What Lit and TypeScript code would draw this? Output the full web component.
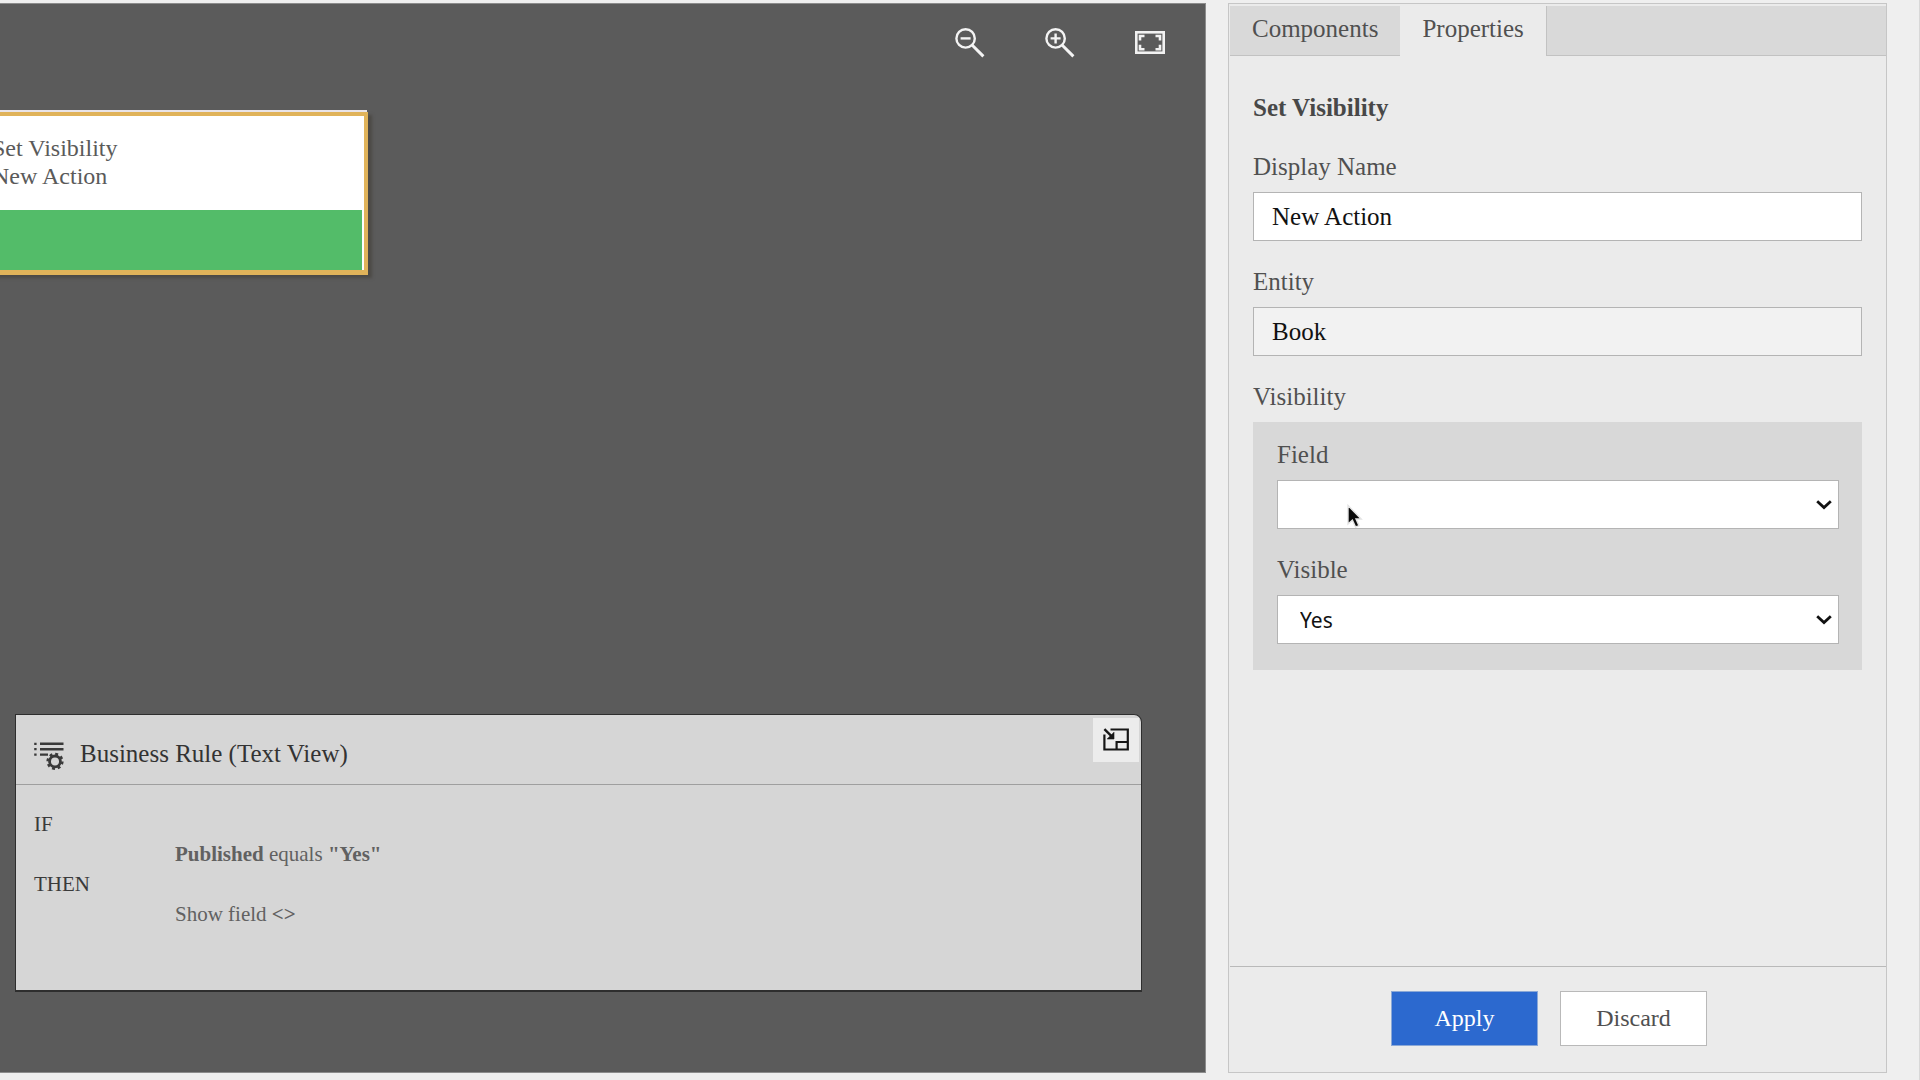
import { LitElement, html, css, svg } from "lit";
import { customElement, state } from "lit/decorators.js";

const chevron = html`<svg class="chevron" viewBox="0 0 16 10" width="16" height="10" aria-hidden="true">
  <path d="M1.2 1.3 L8 7.6 L14.8 1.3" fill="none" stroke="#111" stroke-width="2.8" />
</svg>`;

const magnifier = (sign: string) => html`<svg viewBox="0 0 30 30" width="30" height="30" aria-hidden="true">
  <g fill="none" stroke="#f4f4f4" stroke-width="2.4">
    <circle cx="10.6" cy="10.4" r="9.2" />
    ${svg`<path d=${sign} stroke-width="2.4" />`}
    <path d="M16.8 16.8 L28.4 28.4" stroke-width="3" />
  </g>
</svg>`;

@customElement("app-root")
export class AppRoot extends LitElement {
  static styles = css`
    :host {
      display: block;
      font-family: "Liberation Serif", "Times New Roman", serif;
      font-size: 25px;
      line-height: 30px;
      color: #505050;
    }
    * { box-sizing: border-box; }
    button, input, select { font: inherit; color: inherit; margin: 0; border-radius: 0; }
    button { cursor: pointer; }
    svg { display: block; }

    .page {
      display: flex;
      gap: 22px;
      min-height: 100vh;
      padding: 3px 32px 7px 0;
      background: #efefef;
      border-right: 1px solid #d8d8d8;
    }

    .canvas {
      flex: 1;
      min-width: 0;
      position: relative;
      overflow: hidden;
      display: flex;
      flex-direction: column;
      justify-content: space-between;
      padding: 24px 63px 80px 15px;
      background: #5b5b5b;
      border: 1px solid #8c8c8c;
      border-left: 0;
    }
    .tools {
      display: flex;
      justify-content: flex-end;
      gap: 60px;
      margin-right: -23px;
    }
    .tool {
      padding: 0;
      border: 0;
      background: none;
    }
    .node {
      position: absolute;
      left: -60px;
      top: 108px;
      width: 428px;
      height: 163px;
      display: flex;
      flex-direction: column;
      border: 4px solid #e0b35a;
      border-bottom-width: 5px;
      background: #fff;
      box-shadow: -1px -2px 0 #e9e4e8, 4px 3px 3px #4c4a46;
    }
    .node-text {
      flex: 1;
      padding: 18px 48px;
      font-size: 24px;
      line-height: 28px;
      color: #5a5a5a;
    }
    .node-bar {
      height: 60px;
      margin-right: 2px;
      background: #53bc69;
    }

    .rule {
      border: 1px solid #2e2e2e;
      border-bottom-width: 2px;
      border-top-right-radius: 8px;
      background: #d6d6d6;
      overflow: hidden;
    }
    .rule-head {
      display: flex;
      align-items: center;
      gap: 16px;
      height: 70px;
      padding: 0 2px 0 18px;
      border-bottom: 1px solid #9f9f9f;
      color: #333;
    }
    .rule-title { flex: 1; margin: 0; padding-top: 8px; font-size: 25px; font-weight: 400; }
    .rule-icon { padding-top: 12px; }
    .mini {
      align-self: flex-start;
      display: grid;
      place-items: center;
      width: 46px;
      height: 44px;
      margin-top: 3px;
      padding: 0 0 2px;
      border: 0;
      background: #ececec;
    }
    .rule-body {
      margin: 0;
      height: 205px;
      padding: 24px 18px;
      font-size: 21px;
    }
    .rule-body dt { color: #3a3a3a; }
    .rule-body dd { margin: 0 0 0 141px; color: #616161; }

    .side {
      width: 659px;
      display: flex;
      flex-direction: column;
      padding: 2px 0 0 1px;
      background: #ebebeb;
      border: 1px solid #c6c6c6;
    }
    .tabs { display: flex; height: 50px; }
    .tab {
      padding: 0 22px 3px;
      border: 0;
      border-bottom: 1px solid #c2c2c2;
      background: #d9d9d9;
    }
    .tab.active { background: none; border-color: transparent; }
    .tab-rest {
      flex: 1;
      background: #d9d9d9;
      border: solid #c2c2c2;
      border-width: 0 0 1px 1px;
    }
    .form { flex: 1; padding: 37px 24px 24px 23px; }
    .heading { margin: 0 0 29px; font-size: 25px; line-height: 30px; color: #484848; }
    .field { display: flex; flex-direction: column; gap: 10px; margin-bottom: 26px; }
    .box {
      width: 100%;
      height: 49px;
      padding: 0 18px;
      border: 1px solid #b4b4b4;
      background: #fff;
      color: #111;
      outline: 0;
    }
    .box[readonly] { background: #f2f2f2; }
    .group-label { margin: 0; padding: 0; }
    .group {
      margin-top: 10px;
      padding: 18px 23px 26px 24px;
      background: #d8d8d8;
    }
    .group .field:last-child { margin-bottom: 0; }
    .pick { position: relative; }
    select.box {
      display: block;
      appearance: none;
      padding: 0 22px;
      font-family: "Noto Sans", sans-serif;
      font-size: 21px;
    }
    .chevron { position: absolute; right: 7px; top: 20px; pointer-events: none; }
    .pointer { position: absolute; left: 69px; top: 24px; pointer-events: none; }

    .actions {
      display: flex;
      justify-content: center;
      gap: 22px;
      height: 106px;
      padding: 24px 18px 0 0;
      border-top: 1px solid #b9b9b9;
    }
    .action {
      width: 147px;
      height: 55px;
      padding: 0 0 1px;
      border: 1px solid #b9b9b9;
      background: #fff;
      font-size: 24px;
    }
    .action.primary { border-color: #8ba8d6; background: #2c69cf; color: #fff; }
  `;

  @state() private tab = "Properties";
  @state() private name = "New Action";

  private onName(e: Event) {
    this.name = (e.target as HTMLInputElement).value;
  }

  render() {
    return html`
      <div class="page">
        <main class="canvas">
          <div class="tools">
            <button class="tool" aria-label="Zoom out">${magnifier("M5.6 10.4 H15.6")}</button>
            <button class="tool" aria-label="Zoom in">${magnifier("M5.6 10.4 H15.6 M10.6 5.4 V15.4")}</button>
            <button class="tool" aria-label="Fit to screen">
              <svg viewBox="0 0 30 30" width="30" height="30" aria-hidden="true">
                <g fill="none" stroke="#f2f2f2">
                  <rect x="1.3" y="4.3" width="27.4" height="20.4" stroke-width="2.6" />
                  <path d="M5 12.4 V8 H9.5 M20.5 8 H25 V12.4 M25 16.8 V21.2 H20.5 M9.5 21.2 H5 V16.8" stroke-width="2.6" />
                </g>
              </svg>
            </button>
          </div>

          <section class="node">
            <div class="node-text">Set Visibility<br />${this.name}</div>
            <div class="node-bar"></div>
          </section>

          <section class="rule">
            <header class="rule-head">
              <svg class="rule-icon" viewBox="0 0 30 28" width="30" height="40" aria-hidden="true">
                <g stroke="#3a3a3a" fill="none">
                  <path d="M6 1.8 H29.5 M6 7.2 H29.5 M6 12.6 H14" stroke-width="2.4" />
                  <path d="M0.2 1.8 H2.6 M0.2 7.2 H2.6 M0.2 12.6 H2.6" stroke-width="2.2" />
                  <circle cx="21" cy="19.4" r="5.4" stroke-width="2.8" />
                  <circle cx="21" cy="19.4" r="7.4" stroke-width="2.4" stroke-dasharray="2.9 2.91" />
                </g>
              </svg>
              <h2 class="rule-title">Business Rule (Text View)</h2>
              <button class="mini" aria-label="Minimize">
                <svg viewBox="0 0 26 23" width="26" height="23" aria-hidden="true">
                  <g fill="none" stroke="#161616" stroke-width="2.2">
                    <path d="M7.5 1.5 H24.8 V21.5 H1.4 V6.5" />
                    <path d="M13.6 21.5 V14 H24.8" />
                    <path d="M1.4 1.2 L10 9.6" stroke-width="2.4" />
                    <path d="M11 4.2 V11 H4.2 Z" fill="#161616" stroke-width="0.6" />
                  </g>
                </svg>
              </button>
            </header>
            <dl class="rule-body">
              <dt>IF</dt>
              <dd><b>Published</b> equals <b>"Yes"</b></dd>
              <dt>THEN</dt>
              <dd>Show field <b>&lt;&gt;</b></dd>
            </dl>
          </section>
        </main>

        <aside class="side">
          <nav class="tabs" role="tablist">
            ${["Components", "Properties"].map(
              (t) => html`<button
                role="tab"
                class="tab ${t === this.tab ? "active" : ""}"
                aria-selected=${t === this.tab}
                @click=${() => (this.tab = t)}
              >${t}</button>`
            )}
            <div class="tab-rest"></div>
          </nav>
          <div class="form">
            <h1 class="heading">Set Visibility</h1>
            <div class="field">
              <label for="name">Display Name</label>
              <input class="box" id="name" .value=${this.name} @input=${this.onName} />
            </div>
            <div class="field">
              <label for="entity">Entity</label>
              <input class="box" id="entity" value="Book" readonly />
            </div>
            <div class="group-label" id="vis">Visibility</div>
            <div class="group" role="group" aria-labelledby="vis">
              <div class="field">
                <label for="field">Field</label>
                <div class="pick">
                  <select class="box" id="field"><option></option></select>
                  ${chevron}
                  <svg class="pointer" viewBox="0 0 18 26" width="18" height="26" aria-hidden="true">
                    <path
                      d="M2 1.5 V20 L6.4 16.2 L9.6 23 L13 21.6 L10 15 H15.2 Z"
                      fill="#0a0a0a"
                      stroke="#e4e4e4"
                      stroke-width="1.4"
                    />
                  </svg>
                </div>
              </div>
              <div class="field">
                <label for="visible">Visible</label>
                <div class="pick">
                  <select class="box" id="visible"><option>Yes</option><option>No</option></select>
                  ${chevron}
                </div>
              </div>
            </div>
          </div>
          <footer class="actions">
            <button class="action primary">Apply</button>
            <button class="action">Discard</button>
          </footer>
        </aside>
      </div>
    `;
  }
}
